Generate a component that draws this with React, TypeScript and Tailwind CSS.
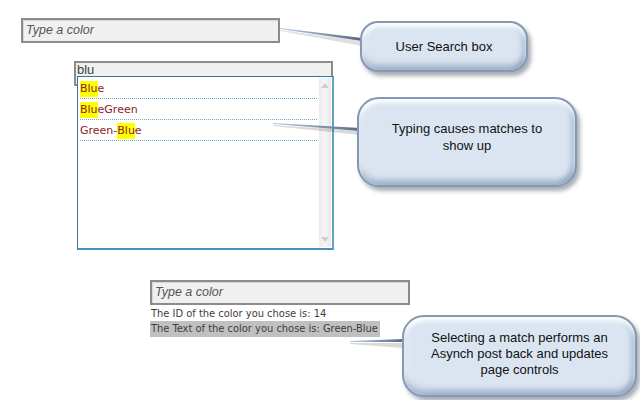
import React from "react";

const callout =
  "absolute flex items-center justify-center text-center rounded-[18px] border-2 border-[#8499b3] bg-[#dbe5f1] text-[#111] shadow-[3px_4px_4px_rgba(60,70,90,0.45),inset_0_4px_4px_rgba(255,255,255,0.95),inset_0_-5px_6px_rgba(110,135,170,0.55),inset_4px_0_5px_rgba(255,255,255,0.6),inset_-4px_0_5px_rgba(110,135,170,0.35)]";

function Item({ pre, hit, post }: { pre: string; hit: string; post: string }) {
  return (
    <div className="h-[21px] flex items-center pt-[2px] border-b border-dotted border-[#6aa6cc] mr-[2px] text-[11px] text-[#8b1c2a]">
      {pre}
      <span className="bg-[#ffff00]">{hit}</span>
      {post}
    </div>
  );
}

export default function App() {
  return (
    <div
      className="relative w-[640px] h-[400px] overflow-hidden bg-white"
      style={{ fontFamily: '"Liberation Sans", Arial, sans-serif' }}
    >
      {/* first search box */}
      <div className="absolute left-[21px] top-[18px] w-[259px] h-[25px] border-2 border-[#8c8c8c] bg-[#f0f0f0] shadow-[inset_1px_1px_0_#d8d8d8] pl-[3px] flex items-center italic text-[12.5px] text-[#555]">
        Type a color
      </div>

      {/* second box with dropdown */}
      <div className="absolute left-[74px] top-[61px] w-[259px] h-[25px] border-2 border-[#8c8c8c] bg-[#f0f0f0] pl-[1px] text-[13px] leading-[13px] text-[#444]">
        blu
      </div>
      <div
        className="absolute left-[77px] top-[76px] w-[257px] h-[174px] border border-[#2f77a8] border-r-2 border-b-2 border-r-[#62a3cc] border-b-[#4a90bf] bg-white flex"
        style={{ fontFamily: '"DejaVu Sans", Verdana, sans-serif' }}
      >
        <div className="flex-1 pl-[2px] pt-[1px]">
          <Item pre="" hit="Blu" post="e" />
          <Item pre="" hit="Blu" post="eGreen" />
          <Item pre="Green-" hit="Blu" post="e" />
        </div>
        <div className="w-[12px] my-[1px] mr-[1px] bg-gradient-to-r from-[#ececec] via-[#f6f6f6] to-[#e8e8e8] flex flex-col justify-between items-center py-[5px]">
          <svg width="8" height="5" viewBox="0 0 8 5"><path d="M0 5 L4 0 L8 5 Z" fill="#cfcfcf" /></svg>
          <svg width="8" height="5" viewBox="0 0 8 5"><path d="M0 0 L4 5 L8 0 Z" fill="#cfcfcf" /></svg>
        </div>
      </div>

      {/* third box and labels */}
      <div className="absolute left-[150px] top-[280px] flex flex-col items-start">
        <div className="w-[260px] h-[25px] border-2 border-[#8c8c8c] bg-[#f0f0f0] shadow-[inset_1px_1px_0_#d8d8d8] pl-[3px] flex items-center italic text-[12.5px] text-[#555]">
          Type a color
        </div>
        <div
          className="text-[11px] leading-[15px] text-[#3d3d3d] pl-[1px] mt-[1px]"
          style={{ fontFamily: '"DejaVu Sans Condensed", "DejaVu Sans", Tahoma, sans-serif' }}
        >
          The ID of the color you chose is: 14
        </div>
        <div
          className="text-[11px] leading-[16px] text-[#3d3d3d] bg-[#c0c0c0] pl-[1px] pr-[2px]"
          style={{ fontFamily: '"DejaVu Sans Condensed", "DejaVu Sans", Tahoma, sans-serif' }}
        >
          The Text of the color you chose is: Green-Blue
        </div>
      </div>

      {/* connector lines */}
      <svg className="absolute left-0 top-0 pointer-events-none" width="640" height="400">
        <defs>
          <linearGradient id="ln" x1="0" x2="1" y1="0" y2="0">
            <stop offset="0" stopColor="#b9cce2" />
            <stop offset="1" stopColor="#566a86" />
          </linearGradient>
        </defs>
        <polygon points="280,30 362,41 362,46 280,31" fill="#000" opacity="0.12" />
        <polygon points="280,28 362,38 362,41 280,29" fill="url(#ln)" />
        <polygon points="273,125 360,131 360,135 273,126" fill="#000" opacity="0.15" />
        <polygon points="273,123 360,128 360,131 273,124" fill="url(#ln)" />
        <polygon points="350,343 404,343 404,348 350,344" fill="#000" opacity="0.15" />
        <polygon points="350,341 404,339 404,342 350,342" fill="url(#ln)" />
      </svg>

      {/* callouts */}
      <div className={callout + " left-[360px] top-[21px] w-[168px] h-[51px] text-[13px]"}>
        User Search box
      </div>
      <div className={callout + " left-[357px] top-[97px] w-[220px] h-[90px] text-[13px] leading-[17px] pb-[10px] rounded-[22px]"}>
        Typing causes matches to
        <br />
        show up
      </div>
      <div className={callout + " left-[402px] top-[315px] w-[235px] h-[82px] text-[13px] leading-[16px] pb-[4px] rounded-[22px]"}>
        Selecting a match performs an
        <br />
        Asynch post back and updates
        <br />
        page controls
      </div>
    </div>
  );
}
